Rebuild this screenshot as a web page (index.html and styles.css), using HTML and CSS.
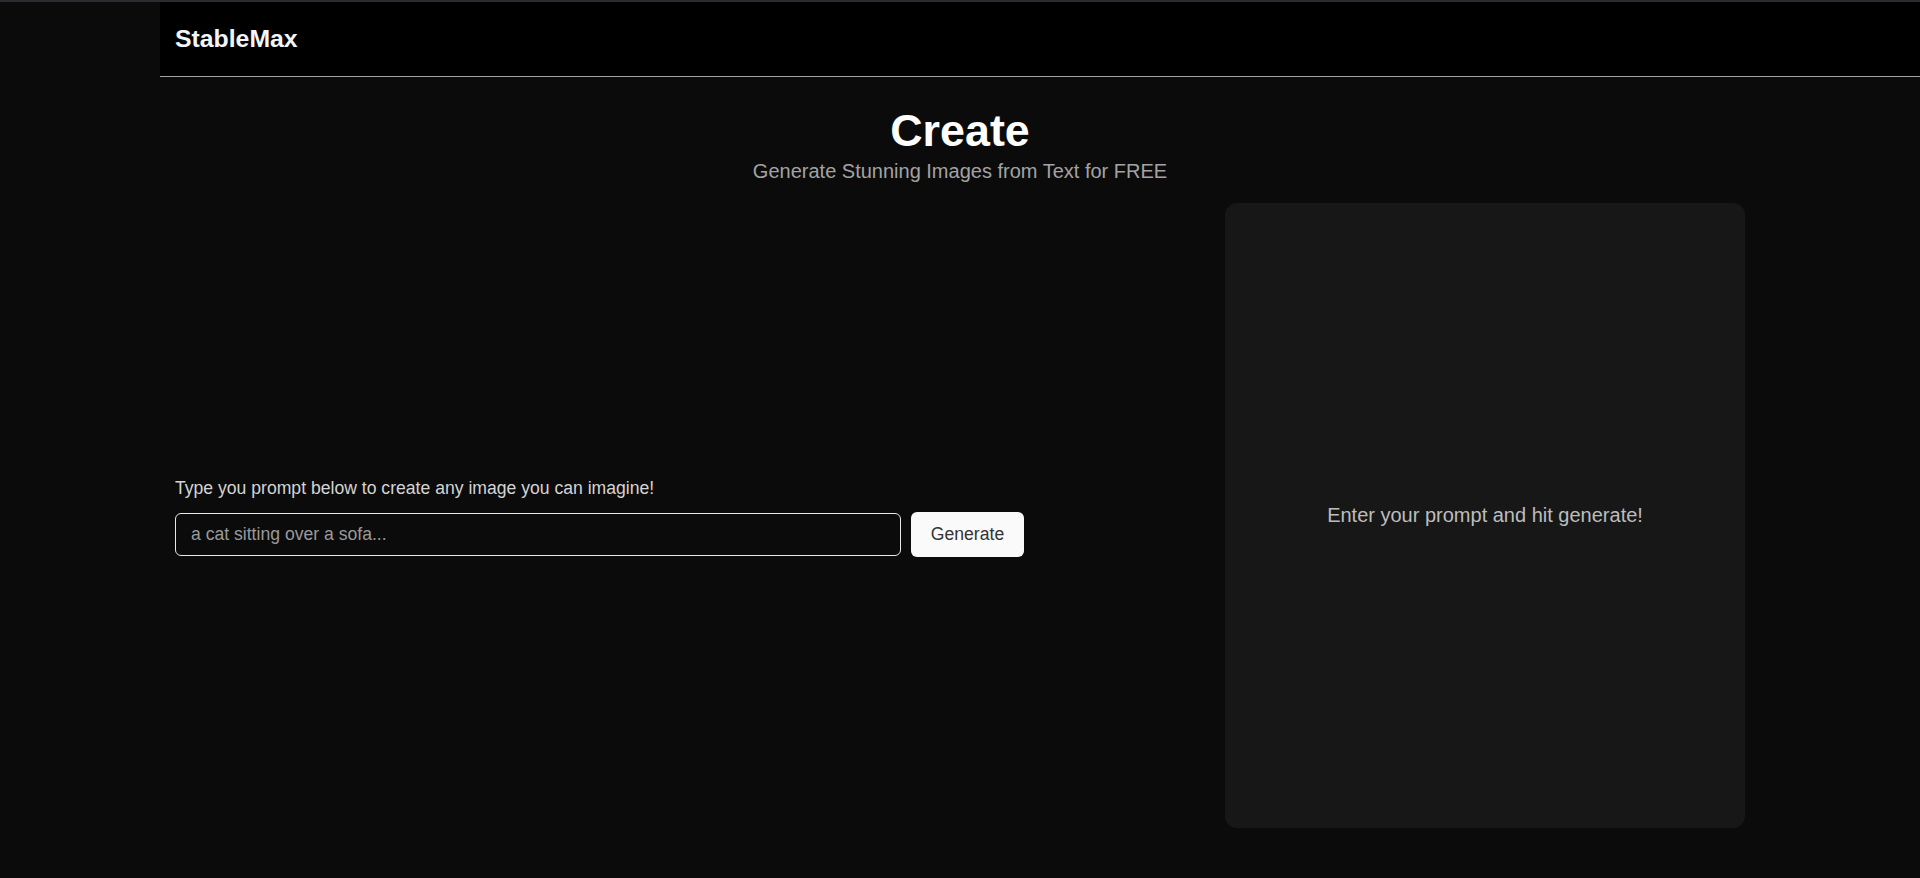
FILE: index.html
```html
<!DOCTYPE html>
<html lang="en">
<head>
<meta charset="utf-8">
<title>StableMax</title>
<link rel="stylesheet" href="styles.css">
</head>
<body>
<div class="topline"></div>
<header class="header">
  <div class="brand">StableMax</div>
</header>
<main class="main">
  <section class="hero">
    <h1 class="title">Create</h1>
    <p class="subtitle">Generate Stunning Images from Text for FREE</p>
  </section>
  <section class="workspace">
    <div class="prompt-col">
      <label class="prompt-label" for="prompt">Type you prompt below to create any image you can imagine!</label>
      <div class="prompt-row">
        <input id="prompt" class="prompt-input" type="text" placeholder="a cat sitting over a sofa...">
        <button class="generate-btn" type="button">Generate</button>
      </div>
    </div>
    <div class="preview">
      <p class="preview-text">Enter your prompt and hit generate!</p>
    </div>
  </section>
</main>
</body>
</html>
```

FILE: styles.css
```css
* { box-sizing: border-box; }

html, body {
  margin: 0;
  padding: 0;
  background: #0b0b0b;
  font-family: "Liberation Sans", Arial, sans-serif;
  color: #fff;
}

.topline {
  height: 2px;
  background: #2b2b30;
}

.header {
  margin-left: 160px;
  height: 75px;
  background: #000;
  border-bottom: 1px solid #a3a3a3;
  display: flex;
  align-items: center;
  padding-left: 15px;
}

.brand {
  font-size: 24.8px;
  font-weight: 700;
  color: #f2f6fa;
}

.main {
  width: 1600px;
  margin: 0 auto;
  padding: 0 15px;
}

.hero {
  text-align: center;
  padding-top: 28px;
}

.title {
  margin: 0;
  font-size: 44.8px;
  font-weight: 700;
  line-height: 51px;
  color: #fff;
}

.subtitle {
  margin: 4px 0 0;
  font-size: 20px;
  line-height: 23px;
  color: #a3a3a3;
}

.workspace {
  margin-top: 20px;
  display: flex;
  justify-content: space-between;
  align-items: center;
}

.prompt-col {
  width: 849px;
  display: flex;
  flex-direction: column;
  padding-top: 4px;
}

.prompt-label {
  font-size: 17.6px;
  line-height: 20px;
  color: #d4d4d4;
  margin-bottom: 14px;
}

.prompt-row {
  display: flex;
  align-items: center;
  gap: 10px;
}

.prompt-input {
  flex: 1;
  height: 43px;
  background: #0b0b0b;
  border: 1px solid #e8e8e8;
  border-radius: 6px;
  padding: 0 15px;
  font-family: inherit;
  font-size: 17.6px;
  color: #e5e5e5;
  outline: none;
}

.prompt-input::placeholder {
  color: #9a9a9a;
}

.generate-btn {
  width: 113px;
  height: 45px;
  background: #fafafa;
  border: none;
  border-radius: 6px;
  font-family: inherit;
  font-size: 17.6px;
  color: #333;
  cursor: pointer;
}

.preview {
  width: 520px;
  height: 625px;
  background: #171717;
  border-radius: 12px;
  display: flex;
  align-items: center;
  justify-content: center;
}

.preview-text {
  margin: 0;
  font-size: 20px;
  color: #bdbdbd;
}
```
